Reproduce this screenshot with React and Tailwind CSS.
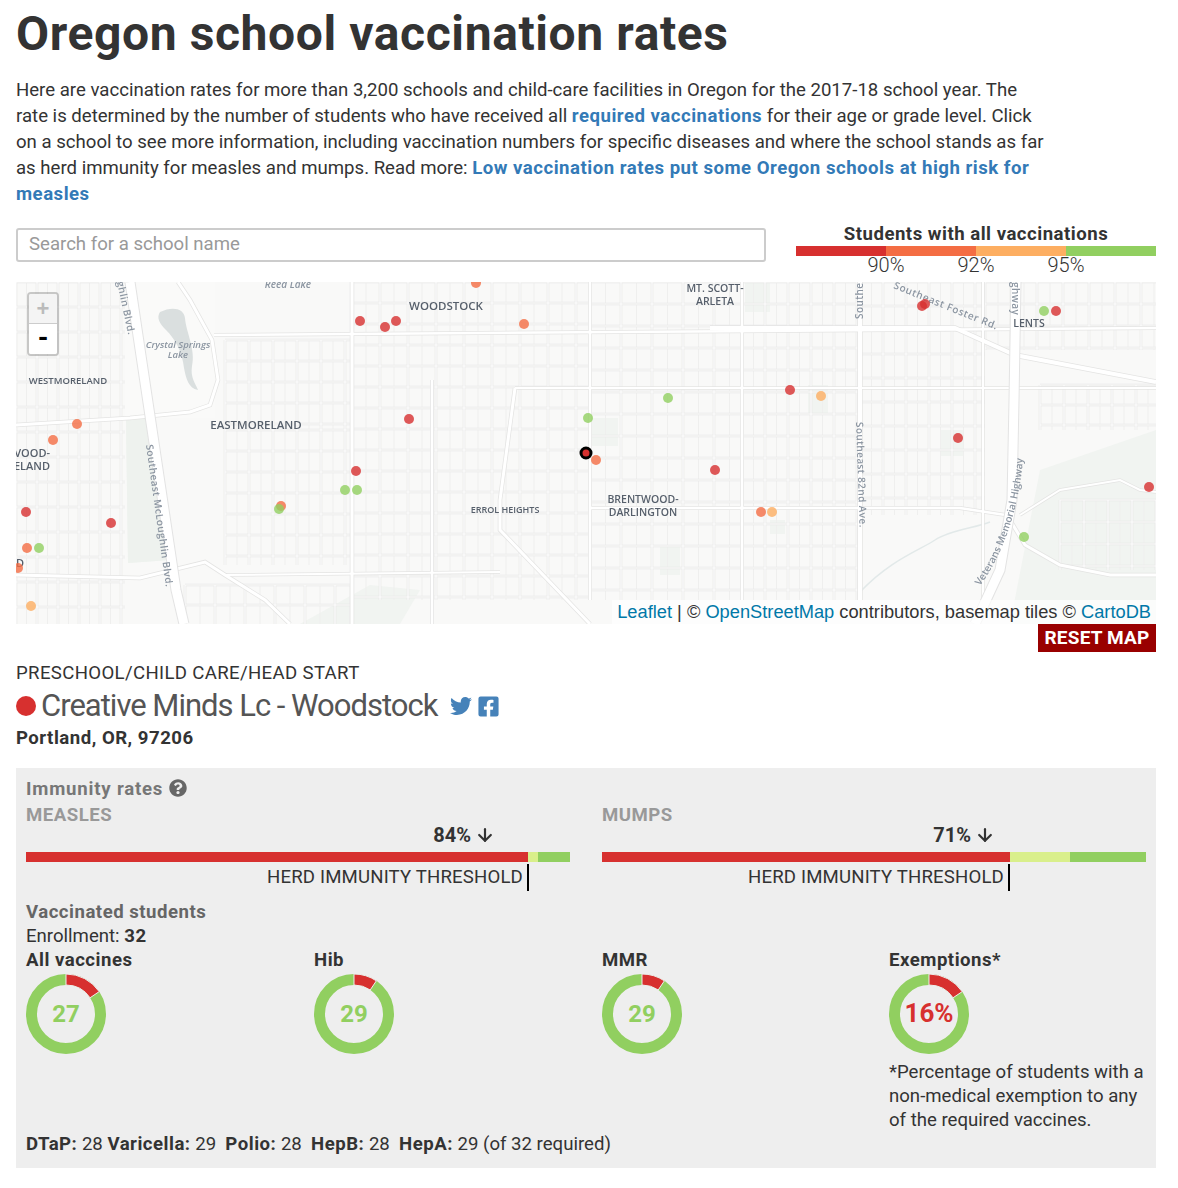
import React from 'react';
import { FaTwitter, FaFacebookSquare, FaQuestionCircle } from 'react-icons/fa';
import { ArrowDown } from 'lucide-react';

const RED = '#d7302f';
const ORANGE = '#f46d43';
const LIGHT_ORANGE = '#fdae61';
const GREEN = '#91cf60';

const markers = [
    [476, 283, ORANGE], [524, 324, ORANGE], [77, 424, ORANGE], [53, 440, ORANGE], [596, 460, ORANGE],
    [281, 506, ORANGE], [27, 548, ORANGE], [761, 512, ORANGE], [18, 568, ORANGE],
    [821, 396, LIGHT_ORANGE], [772, 512, LIGHT_ORANGE], [31, 606, LIGHT_ORANGE],
    [360, 321, RED], [385, 327, RED], [396, 321, RED], [409, 419, RED], [356, 471, RED], [715, 470, RED],
    [790, 390, RED], [958, 438, RED], [925, 304, RED], [922, 306, RED], [1056, 311, RED], [26, 512, RED], [111, 523, RED], [1149, 487, RED],
    [588, 418, GREEN], [668, 398, GREEN], [1044, 311, GREEN], [345, 490, GREEN], [357, 490, GREEN],
    [279, 509, GREEN], [39, 548, GREEN], [1024, 537, GREEN],
];

// x0, y0, x1, y1, dx, dy
const streetGrids = [
    [16, 282, 125, 624, 21, 25],
    [185, 585, 350, 624, 30, 20],
    [225, 340, 352, 430, 24, 21],
    [225, 430, 352, 565, 24, 21],
    [352, 282, 590, 600, 28, 21],
    [590, 282, 742, 600, 31, 22],
    [742, 282, 860, 600, 23, 22],
    [860, 282, 985, 515, 23, 24],
    [985, 282, 1156, 350, 26, 22],
    [1040, 385, 1156, 430, 24, 20],
    [1060, 500, 1156, 570, 24, 22],
];

const majorRoads = [
    ['M16 425 L130 418 L190 412 L210 405 L218 380 L212 340 L190 300 L178 282', 3],
    ['M214 335 L1156 328', 2.5],
    ['M515 388 L1156 388', 2],
    ['M352 282 V624', 3],
    ['M432 380 V624', 2.5],
    ['M515 388 L500 500 V530 L590 624', 3],
    ['M590 282 V600', 2.5],
    ['M742 282 V600', 2.5],
    ['M860 282 V600', 4],
    ['M983 282 V600', 2],
    ['M590 508 L960 508 L1012 516', 2.5],
    ['M710 328 L955 328 L1015 355 L1156 382', 4],
    ['M16 575 L140 578 L205 562 L225 575 L265 600 L290 624', 3],
    ['M225 575 L500 572', 2],
    ['M1010 520 L1025 545 L1060 565 L1110 575 L1156 575', 3],
    ['M1020 515 L1060 490 L1120 480 L1140 490 L1156 492', 2],
];

const placeLabels = [
    ['WOODSTOCK', 446, 310, 11.5], ['MT. SCOTT-', 715, 292, 10.5], ['ARLETA', 715, 305, 10.5],
    ['WESTMORELAND', 68, 384, 9.5], ['EASTMORELAND', 256, 429, 11.5], ['ERROL HEIGHTS', 505, 513, 9],
    ['BRENTWOOD-', 643, 503, 10.5], ['DARLINGTON', 643, 516, 10.5], ['LENTS', 1029, 327, 10.5],
];

const streetPath = (g) => {
    let d = '';
    for (let x = g[0]; x <= g[2]; x += g[4]) d += `M${x} ${g[1]}V${g[3]}`;
    for (let y = g[1]; y <= g[3]; y += g[5]) d += `M${g[0]} ${y}H${g[2]}`;
    return d;
};

// narrow lots between the streets
const lotPath = (g) => {
    let d = '';
    for (let x = g[0] + g[4] / 2; x <= g[2]; x += g[4]) d += `M${x} ${g[1]}V${g[3]}`;
    return d;
};

const MapDrawing = () => (
    <svg viewBox="16 282 1140 342" className="block w-full h-full blur-[0.4px] font-['Open_Sans',sans-serif]">
        <defs>
            <path id="veterans" d="M980 586 Q1020 530 1024 444" />
        </defs>
        <rect x="16" y="282" width="1140" height="342" fill="#f9f9f8" />

        <g fill="#f1f4f1">
            <path d="M126 420 L146 418 L170 560 L128 563 Z" />
            <path d="M1040 470 L1156 430 V624 L1010 624 Z" />
            <path d="M300 624 L370 585 L420 590 L400 624 Z" />
            <rect x="745" y="282" width="25" height="30" />
            <rect x="590" y="418" width="28" height="28" />
            <rect x="770" y="520" width="15" height="14" />
            <rect x="660" y="547" width="20" height="28" />
            <rect x="808" y="385" width="20" height="30" />
            <rect x="940" y="430" width="24" height="26" />
        </g>
        <rect x="132" y="476" width="15" height="19" fill="#dde1e1" />

        {streetGrids.map((g, i) => <path key={i} d={lotPath(g)} stroke="#efefee" strokeWidth="1" fill="none" />)}
        {streetGrids.map((g, i) => <path key={i} d={streetPath(g)} stroke="#e6e6e5" strokeWidth="2.6" fill="none" />)}
        {streetGrids.map((g, i) => <path key={i} d={streetPath(g)} stroke="#fdfdfd" strokeWidth="1.2" fill="none" />)}

        <rect x="125" y="282" width="90" height="136" fill="#f9f9f8" opacity="0.9" />
        <path d="M126 420 L146 418 L170 560 L128 563 Z" fill="#eef2ee" />
        <path d="M160 312 C172 306 184 308 185 318 C186 332 196 350 192 366 C190 378 196 384 198 390 C188 388 186 378 184 368 C182 352 176 340 166 330 C160 324 156 318 160 312 Z" fill="#dadfdf" />
        <path d="M860 592 C890 560 920 550 935 540 C950 530 975 528 990 522" stroke="#e2e9e9" strokeWidth="1.5" fill="none" />

        {majorRoads.map(([d, w], i) => <path key={i} d={d} stroke="#e4e4e3" strokeWidth={w + 1.5} fill="none" />)}
        {majorRoads.map(([d, w], i) => <path key={i} d={d} stroke="#ffffff" strokeWidth={w} fill="none" />)}

        {/* highways */}
        <path d="M130 282 L176 590 L184 624" stroke="#e3e3e3" strokeWidth="11" fill="none" />
        <path d="M130 282 L176 590 L184 624" stroke="#ffffff" strokeWidth="9" fill="none" />
        <path d="M1016 282 L1014 400 L1012 500 L1000 570 L975 624" stroke="#e3e3e3" strokeWidth="11" fill="none" />
        <path d="M1016 282 L1014 400 L1012 500 L1000 570 L975 624" stroke="#ffffff" strokeWidth="9" fill="none" />

        <g fill="#565f6b" fontWeight="600" textAnchor="middle">
            {placeLabels.map(([t, x, y, s]) => <text key={t} x={x} y={y} fontSize={s}>{t}</text>)}
            <text x="50" y="457" fontSize="11" textAnchor="end">VOOD-</text>
            <text x="50" y="470" fontSize="11" textAnchor="end">ELAND</text>
            <text x="24" y="567" fontSize="11" textAnchor="end">OD</text>
        </g>
        <g fill="#8b95a1" fontWeight="600" fontSize="10">
            <text x="288" y="288" textAnchor="middle" fontStyle="italic">Reed Lake</text>
            <text x="178" y="348" textAnchor="middle" fontStyle="italic" fontSize="9.5">Crystal Springs</text>
            <text x="178" y="358" textAnchor="middle" fontStyle="italic" fontSize="9.5">Lake</text>
            <text transform="translate(146 445) rotate(82)" letterSpacing="0.4">Southeast McLoughlin Blvd.</text>
            <text transform="translate(117 282) rotate(78)" letterSpacing="0.4">ghlin Blvd.</text>
            <text transform="translate(856 422) rotate(88)" letterSpacing="0.4">Southeast 82nd Ave.</text>
            <text transform="translate(863 319) rotate(-90)" letterSpacing="0.4">Southe</text>
            <text transform="translate(893 288) rotate(22)" letterSpacing="0.6">Southeast Foster Rd.</text>
            <text transform="translate(1012 282) rotate(90)" letterSpacing="0.4">ghway</text>
            <text><textPath href="#veterans">Veterans Memorial Highway</textPath></text>
        </g>

        {markers.map(([x, y, c], i) => <circle key={i} cx={x} cy={y} r="5" fill={c} opacity="0.8" />)}
        <circle cx="586" cy="453" r="5" fill={RED} stroke="#000000" strokeWidth="3" />
    </svg>
);

const ThresholdBar = ({ label, segments, pctWidth, thresholdWidth, pct }) => (
    <div>
        <div className="font-bold text-[#999] leading-[22px] h-[22px] tracking-[0.5px]">{label}</div>
        <div className="flex items-center justify-end h-[18px] font-bold text-[20px] text-[#333]" style={{ width: pctWidth }}>
            {pct}
            <ArrowDown size={20} strokeWidth={2.6} className="ml-[4px]" />
        </div>
        <div className="flex h-[10px] mt-[8px]">
            {segments.map(([w, c]) => <div key={c} style={{ width: w, backgroundColor: c }} />)}
        </div>
        <div className="flex justify-end items-center h-[27px] mt-[2px] whitespace-nowrap tracking-[0.17px]" style={{ width: thresholdWidth }}>
            <span className="mt-[1px]">HERD IMMUNITY THRESHOLD</span>
            <div className="ml-1 w-[2px] h-full bg-black" />
        </div>
    </div>
);

const polar = (deg, r) => {
    const a = (deg - 90) * Math.PI / 180;
    return `${40 + r * Math.cos(a)} ${40 + r * Math.sin(a)}`;
};

const Donut = ({ angle, label, color, size = 24 }) => (
    <svg width="80" height="80" viewBox="0 0 80 80" className="block">
        <circle cx="40" cy="40" r="34.5" fill="none" stroke={GREEN} strokeWidth="11" />
        <path
            d={`M${polar(0, 40)} A40 40 0 0 1 ${polar(angle, 40)} L${polar(angle, 29)} A29 29 0 0 0 ${polar(0, 29)} Z`}
            fill={RED}
            stroke="#eeeeee"
            strokeWidth="1"
        />
        <text x="40" y="48" textAnchor="middle" fontSize={size} fontWeight="700" fill={color}>{label}</text>
    </svg>
);

const Stat = ({ title, angle, label, color = GREEN, size, children }) => (
    <div>
        <div className="font-bold text-[#333] leading-[24px] mb-[2px] tracking-[0.5px]">{title}</div>
        <Donut angle={angle} label={label} color={color} size={size} />
        {children}
    </div>
);

const App = () => {
    return (
        <div className="w-[1178px] h-[1188px] pl-4 bg-white text-[18.6px] text-[#333] font-['Roboto',sans-serif] overflow-hidden">
            <div className="w-[1140px]">
                <h1 className="text-[48px] leading-[50px] font-bold pt-[9px] tracking-[0.6px]">Oregon school vaccination rates</h1>
                <p className="w-[1035px] mt-[18px] leading-[26px]">
                    Here are vaccination rates for more than 3,200 schools and child-care facilities in Oregon for the 2017-18 school year. The
                    rate is determined by the number of students who have received all <a className="font-bold tracking-[0.5px] text-[#337ab7]" href="#">required vaccinations</a> for their age or grade level. Click
                    on a school to see more information, including vaccination numbers for specific diseases and where the school stands as far
                    as herd immunity for measles and mumps. Read more: <a className="font-bold tracking-[0.5px] text-[#337ab7]" href="#">Low vaccination rates put some Oregon schools at high risk for measles</a>
                </p>

                <div className="flex justify-between mt-[14px] h-[61px]">
                    <input
                        className="w-[750px] h-[34px] mt-[7px] px-[11px] pb-[2px] border-2 border-[#ccc] rounded-[3px] outline-none placeholder:text-[#999]"
                        placeholder="Search for a school name"
                    />
                    <div className="w-[360px]">
                        <div className="font-bold text-center leading-[24px] mt-[1px] tracking-[0.5px]">Students with all vaccinations</div>
                        <div className="flex h-[10px]">
                            <div className="w-[90px] bg-[#d7302f]" />
                            <div className="w-[90px] bg-[#f46d43]" />
                            <div className="w-[90px] bg-[#fdae61]" />
                            <div className="w-[90px] bg-[#91cf60]" />
                        </div>
                        <div className="grid grid-cols-[90px_90px_90px] ml-[45px] text-[20px] font-light leading-[19px] text-center">
                            <span>90%</span>
                            <span>92%</span>
                            <span>95%</span>
                        </div>
                    </div>
                </div>

                <div className="relative h-[342px] overflow-hidden">
                    <MapDrawing />
                    <div className="absolute left-[11px] top-[10px] w-[32px] rounded-[4px] border-2 border-black/20 bg-clip-padding">
                        <div className="h-[30px] bg-[#f4f4f4] text-[#bbb] rounded-t-[2px] border-b border-[#ccc] text-[22px] leading-[30px] text-center font-bold font-['Liberation_Sans',sans-serif]">+</div>
                        <div className="h-[30px] bg-white text-black rounded-b-[2px] text-[26px] leading-[28px] text-center font-bold font-['Liberation_Mono',monospace]">-</div>
                    </div>
                    <div className="absolute right-0 bottom-0 h-[24px] px-[5px] bg-white/70 whitespace-nowrap text-[18.25px] leading-[24px] font-['Liberation_Sans',sans-serif]">
                        <a className="text-[#0078a8]" href="#">Leaflet</a> | © <a className="text-[#0078a8]" href="#">OpenStreetMap</a> contributors, basemap tiles © <a className="text-[#0078a8]" href="#">CartoDB</a>
                    </div>
                </div>
                <div className="flex justify-end">
                    <button className="w-[118px] h-[28px] bg-[#990000] text-white font-bold text-[19px] leading-[28px] tracking-[0.2px]">RESET MAP</button>
                </div>

                <div className="mt-[9px] leading-[24px] tracking-[0.35px]">PRESCHOOL/CHILD CARE/HEAD START</div>
                <div className="flex items-center h-[38px] mt-[2px]">
                    <span className="w-[20px] h-[20px] rounded-full bg-[#d7302f]" />
                    <span className="ml-[5px] text-[31px] text-[#555] tracking-[-1px] leading-[38px]">Creative Minds Lc - Woodstock</span>
                    <FaTwitter size={22} className="ml-[13px] text-[#4682b9]" />
                    <FaFacebookSquare size={23} className="ml-[5px] text-[#4682b9]" />
                </div>
                <div className="font-bold leading-[24px] mt-[1px] tracking-[0.5px]">Portland, OR, 97206</div>

                <div className="mt-[18px] h-[400px] bg-[#eee] px-[10px] pt-[10px]">
                    <div className="flex items-center h-[24px] font-bold text-[#777] tracking-[0.8px]">
                        Immunity rates
                        <FaQuestionCircle size={18} className="ml-[6px] mb-[5px] text-[#666]" />
                    </div>
                    <div className="grid grid-cols-[576px_544px] mt-[2px]">
                        <ThresholdBar
                            label="MEASLES"
                            pct="84%"
                            pctWidth={469}
                            thresholdWidth={503}
                            segments={[[502, RED], [10, '#d9ef8b'], [32, GREEN]]}
                        />
                        <ThresholdBar
                            label="MUMPS"
                            pct="71%"
                            pctWidth={393}
                            thresholdWidth={408}
                            segments={[[408, RED], [60, '#d9ef8b'], [76, GREEN]]}
                        />
                    </div>
                    <div className="font-bold text-[#666] leading-[24px] mt-[9px] tracking-[0.5px]">Vaccinated students</div>
                    <div className="leading-[24px]">Enrollment: <b className="tracking-[0.5px]">32</b></div>
                    <div className="grid grid-cols-[288px_288px_287px_257px] h-[184px]">
                        <Stat title="All vaccines" angle={56} label="27" />
                        <Stat title="Hib" angle={34} label="29" />
                        <Stat title="MMR" angle={34} label="29" />
                        <Stat title="Exemptions*" angle={56} label="16%" color={RED} size={26}>
                            <p className="leading-[24px] mt-[6px]">*Percentage of students with a non-medical exemption to any of the required vaccines.</p>
                        </Stat>
                    </div>
                    <div className="leading-[24px] whitespace-pre">
                        <b className="tracking-[0.5px]">DTaP:</b> 28 <b className="tracking-[0.5px]">Varicella:</b> 29  <b className="tracking-[0.5px]">Polio:</b> 28  <b className="tracking-[0.5px]">HepB:</b> 28  <b className="tracking-[0.5px]">HepA:</b> 29 (of 32 required)
                    </div>
                </div>
            </div>
        </div>
    );
};

export default App;
